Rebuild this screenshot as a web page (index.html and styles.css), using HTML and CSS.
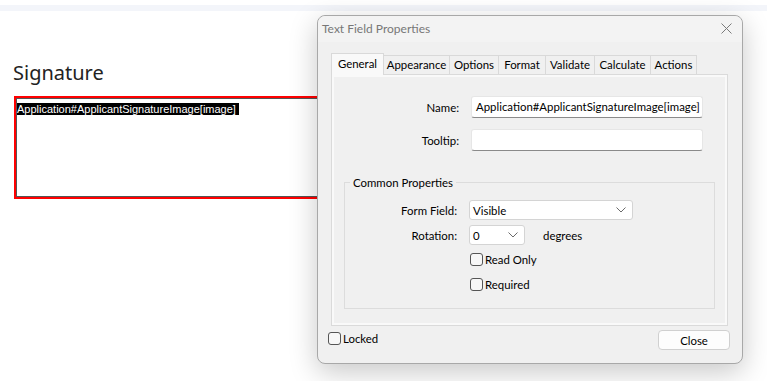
FILE: index.html
```html
<!DOCTYPE html>
<html lang="en">
<head>
    <meta charset="UTF-8">
    <meta name="viewport" content="width=device-width, initial-scale=1.0">
    <title>Text Field Properties</title>
    <link rel="stylesheet" href="styles.css">
</head>
<body>
    <div class="top-strip"></div>

    <div class="page">
        <h2 class="section-title">Signature</h2>
        <div class="sig-box">
            <div class="sig-inner">
                <span class="sig-name">Application#ApplicantSignatureImage[image]&nbsp;</span>
            </div>
        </div>
    </div>

    <!-- dialog floats over the page -->
    <div class="dialog">
        <div class="title-bar">
            <span class="title">Text Field Properties</span>
            <svg class="close-x" width="11" height="11" viewBox="0 0 11 11">
                <path d="M0.5 0.5 L10.5 10.5 M10.5 0.5 L0.5 10.5" stroke="#7a7a7a" stroke-width="1" fill="none"/>
            </svg>
        </div>

        <div class="dialog-body">
            <div class="tabs">
                <div class="tab active t-general">General</div>
                <div class="tab t-appearance">Appearance</div>
                <div class="tab t-options">Options</div>
                <div class="tab t-format">Format</div>
                <div class="tab t-validate">Validate</div>
                <div class="tab t-calculate">Calculate</div>
                <div class="tab t-actions">Actions</div>
            </div>

            <div class="panel">
                <div class="row">
                    <label class="label">Name:</label>
                    <div class="text-input">Application#ApplicantSignatureImage[image]</div>
                </div>
                <div class="row">
                    <label class="label">Tooltip:</label>
                    <div class="text-input"></div>
                </div>

                <fieldset class="group">
                    <legend>Common Properties</legend>
                    <div class="row small">
                        <label class="label">Form Field:</label>
                        <div class="select wide">
                            <span>Visible</span>
                            <svg width="10" height="6" viewBox="0 0 10 6"><path d="M0.5 0.5 L5 5 L9.5 0.5" stroke="#6a6a6a" fill="none"/></svg>
                        </div>
                    </div>
                    <div class="row small">
                        <label class="label">Rotation:</label>
                        <div class="select narrow">
                            <span>0</span>
                            <svg width="10" height="6" viewBox="0 0 10 6"><path d="M0.5 0.5 L5 5 L9.5 0.5" stroke="#6a6a6a" fill="none"/></svg>
                        </div>
                        <span class="unit">degrees</span>
                    </div>
                    <div class="check-row">
                        <span class="check"></span>Read Only
                    </div>
                    <div class="check-row">
                        <span class="check"></span>Required
                    </div>
                </fieldset>
            </div>

            <div class="footer">
                <div class="locked"><span class="check"></span>Locked</div>
                <button class="close-btn">Close</button>
            </div>
        </div>
    </div>
</body>
</html>
```

FILE: styles.css
```css
* {
    box-sizing: border-box;
}

body {
    margin: 0;
    background: #fff;
    font-family: 'Lato', sans-serif;
    overflow: hidden;
}

.top-strip {
    height: 6px;
    margin-top: 5px;
    background: #f3f5fa;
}

.page {
    padding: 0 0 0 13px;
}

.section-title {
    margin: 49px 0 10px 0;
    font-family: 'Noto Sans', sans-serif;
    font-weight: 400;
    font-size: 20px;
    color: #222;
    line-height: 26px;
}

.sig-box {
    margin-left: 1px;
    width: 400px;
    height: 103px;
    border: 2px solid #ff0000;
}

.sig-inner {
    height: 100%;
    border: 1px solid #555;
    padding: 1px 0 0 0;
    line-height: 13px;
}

.sig-name {
    background: #000;
    color: #fff;
    font-family: 'Liberation Sans', sans-serif;
    font-size: 11px;
    line-height: 13px;
}

/* dialog */
.dialog {
    position: absolute;
    left: 317px;
    top: 15px;
    width: 426px;
    height: 349px;
    background: #f0f0f0;
    border: 1px solid #a8a8a8;
    border-radius: 8px;
    box-shadow: 0 8px 28px rgba(0, 0, 0, 0.22);
    font-size: 11.4px;
    color: #000;
}

.title-bar {
    height: 26px;
    display: flex;
    align-items: center;
    justify-content: space-between;
    padding: 0 10px 2px 4px;
    background: #f3f3f3;
    border-radius: 8px 8px 0 0;
}

.title {
    color: #777;
    font-size: 12px;
}

.dialog-body {
    padding: 10px 13px 0 13px;
}

.tabs {
    display: flex;
    align-items: flex-end;
    height: 22px;
}

.tab {
    height: 19px;
    line-height: 18px;
    text-align: center;
    border: 1px solid #d9d9d9;
    border-bottom: none;
    border-left: none;
    background: #f0f0f0;
}

.tab.active {
    height: 22px;
    line-height: 19px;
    border-left: 1px solid #d9d9d9;
    background: #f9f9f9;
    position: relative;
    top: 1px;
}

.t-general { width: 53px; }
.t-appearance { width: 66px; }
.t-options { width: 49px; }
.t-format { width: 47px; }
.t-validate { width: 49px; }
.t-calculate { width: 56px; }
.t-actions { width: 46px; }

.panel {
    width: 397px;
    height: 252px;
    border: 1px solid #dadada;
    box-shadow: inset 0 0 0 2px #f9f9f9;
    background: #f0f0f0;
    padding: 21px 0 0 0;
}

.row {
    display: flex;
    align-items: center;
    margin-bottom: 11px;
}

.label {
    width: 127px;
    text-align: right;
    margin-right: 12px;
}

.text-input {
    width: 232px;
    height: 22px;
    background: #fff;
    border: 1px solid #e6e6e6;
    border-bottom: 1px solid #8a8a8a;
    border-radius: 3px;
    padding: 0 4px;
    line-height: 20px;
    white-space: nowrap;
    overflow: hidden;
}

.group {
    margin: 25px 0 0 12px;
    width: 371px;
    height: 133px;
    border: 1px solid #dcdcdc;
    padding: 11px 0 0 0;
}

.group legend {
    padding: 0 3px;
    margin-left: 5px;
}

.row.small {
    margin-bottom: 5px;
}

.group .label {
    width: 112px;
}

.select {
    height: 20px;
    background: #fff;
    border: 1px solid #d4d4d4;
    border-radius: 3px;
    display: flex;
    align-items: center;
    justify-content: space-between;
    padding: 0 6px 0 3px;
}

.select.wide {
    width: 164px;
}

.select.narrow {
    width: 56px;
}

.unit {
    margin-left: 18px;
}

.check-row {
    display: flex;
    align-items: center;
    margin: 8px 0 0 125px;
    height: 13px;
}

.check-row + .check-row {
    margin-top: 12px;
}

.check {
    width: 13px;
    height: 13px;
    border: 1px solid #555;
    border-radius: 3px;
    background: #f7f7f7;
    margin-right: 2px;
    display: inline-block;
}

.footer {
    display: flex;
    justify-content: space-between;
    align-items: center;
    margin-top: 4px;
    width: 399px;
}

.locked {
    display: flex;
    align-items: center;
    margin: 0 0 4px -3px;
}

.close-btn {
    width: 72px;
    height: 20px;
    font-family: 'Lato', sans-serif;
    font-size: 11.4px;
    background: #fdfdfd;
    border: 1px solid #d0d0d0;
    border-radius: 4px;
    padding: 0;
}
```
